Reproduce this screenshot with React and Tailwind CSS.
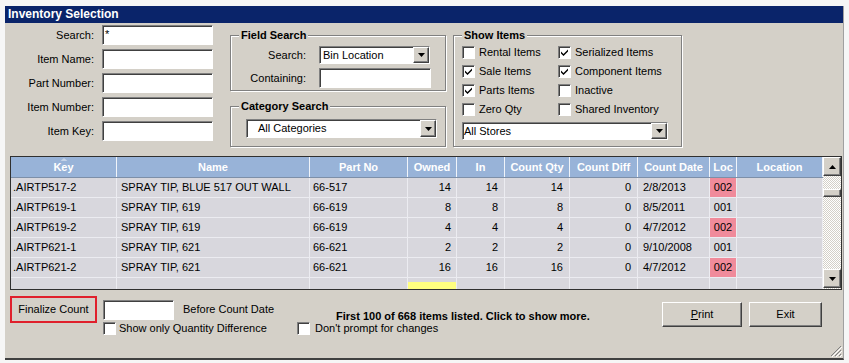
import React from "react";

const sunken =
  "bg-white border border-t-[#808080] border-l-[#808080] border-b-white border-r-white shadow-[inset_1px_1px_0_#404040]";
const raised =
  "bg-[#d4d0c8] border border-t-white border-l-white border-r-[#404040] border-b-[#404040] shadow-[inset_-1px_-1px_0_#808080]";

function Arrow({ down = true }) {
  return (
    <svg width="7" height="4" viewBox="0 0 7 4" className={down ? "" : "rotate-180"}>
      <path d="M0 0H7L3.5 4Z" fill="#000" />
    </svg>
  );
}

function Select({ text, className, textClass = "pl-[3px]" }) {
  return (
    <div className={`${sunken} ${className} flex items-center`}>
      <span className={`flex-1 ${textClass}`}>{text}</span>
      <div className={`${raised} w-[16px] h-full flex items-center justify-center`}>
        <Arrow />
      </div>
    </div>
  );
}

function Check({ checked }) {
  return (
    <div className={`${sunken} w-[13px] h-[13px] flex items-center justify-center shrink-0`}>
      {checked && (
        <svg width="7" height="7" viewBox="0 0 7 7">
          <path d="M0 2.5L2.5 5L7 0.5V2.5L2.5 7L0 4.5Z" fill="#000" />
        </svg>
      )}
    </div>
  );
}

function Group({ title, className, children }) {
  return (
    <div
      className={`relative border border-[#808080] shadow-[1px_1px_0_#fff,inset_1px_1px_0_#fff] ${className}`}
    >
      <span className="absolute -top-[7px] left-[8px] bg-[#d4d0c8] px-[2px] font-bold leading-[13px]">
        {title}
      </span>
      {children}
    </div>
  );
}

const cols = [
  { h: "Key", w: "w-[106px]", a: "text-left pl-[2px]" },
  { h: "Name", w: "w-[193px]", a: "text-left pl-[4px]" },
  { h: "Part No", w: "w-[98px]", a: "text-left pl-[3px]" },
  { h: "Owned", w: "w-[49px]", a: "text-right pr-[5px]" },
  { h: "In", w: "w-[48px]", a: "text-right pr-[6px]" },
  { h: "Count Qty", w: "w-[65px]", a: "text-right pr-[6px]" },
  { h: "Count Diff", w: "w-[68px]", a: "text-right pr-[6px]" },
  { h: "Count Date", w: "w-[72px]", a: "text-left pl-[5px]" },
  { h: "Loc", w: "w-[27px]", a: "text-center" },
  { h: "Location", w: "w-[86px]", a: "" },
];

const rows = [
  [".AIRTP517-2", "SPRAY TIP, BLUE 517 OUT WALL", "66-517", "14", "14", "14", "0", "2/8/2013", "002", ""],
  [".AIRTP619-1", "SPRAY TIP, 619", "66-619", "8", "8", "8", "0", "8/5/2011", "001", ""],
  [".AIRTP619-2", "SPRAY TIP, 619", "66-619", "4", "4", "4", "0", "4/7/2012", "002", ""],
  [".AIRTP621-1", "SPRAY TIP, 621", "66-621", "2", "2", "2", "0", "9/10/2008", "001", ""],
  [".AIRTP621-2", "SPRAY TIP, 621", "66-621", "16", "16", "16", "0", "4/7/2012", "002", ""],
];

const labels = ["Search:", "Item Name:", "Part Number:", "Item Number:", "Item Key:"];

const showItems = [
  ["Rental Items", false, "Serialized Items", true],
  ["Sale Items", true, "Component Items", true],
  ["Parts Items", true, "Inactive", false],
  ["Zero Qty", false, "Shared Inventory", false],
];

export default function App() {
  return (
    <div className="min-h-screen bg-[#f6f6f6] pl-[5px] pt-[6px] font-['Liberation_Sans',Arial,sans-serif] text-[11px] leading-[13px] text-black">
      <div className="relative w-[839px] h-[354px] flex flex-col bg-[#d4d0c8] border-b-2 border-b-[#404040] border-r border-r-[#a0a0a0]">
        {/* title */}
        <div className="h-[17px] shrink-0 bg-[#0a246a] text-white font-bold text-[12px] leading-[17px] pl-[3px]">
          Inventory Selection
        </div>

        {/* top section */}
        <div className="h-[133px] shrink-0 flex">
          <div className="w-[225px] pt-[2px] flex flex-col gap-[4px]">
            {labels.map((l, i) => (
              <div key={l} className="flex items-center gap-[8px]">
                <span className="w-[89px] text-right">{l}</span>
                <div className={`${sunken} w-[111px] h-[20px] pl-[2px] leading-[16px]`}>
                  {i === 0 ? "*" : ""}
                </div>
              </div>
            ))}
          </div>

          <div className="w-[216px] pt-[12px] flex flex-col">
            <Group title="Field Search" className="h-[56px]">
              <div className="flex items-center mt-[10px]">
                <span className="w-[75px] text-right">Search:</span>
                <Select text="Bin Location" className="ml-[13px] w-[111px] h-[18px]" />
              </div>
              <div className="flex items-center mt-[4px]">
                <span className="w-[75px] text-right">Containing:</span>
                <div className={`${sunken} ml-[13px] w-[112px] h-[20px]`} />
              </div>
            </Group>
            <Group title="Category Search" className="h-[41px] mt-[15px]">
              <Select
                text="All Categories"
                textClass="pl-[11px]"
                className="ml-[15px] mt-[12px] w-[191px] h-[19px]"
              />
            </Group>
          </div>

          <div className="ml-[7px] pt-[12px]">
            <Group title="Show Items" className="w-[229px] h-[112px] pt-[7px]">
              {showItems.map(([a, ac, b, bc]) => (
                <div key={a} className="h-[19px] flex items-center">
                  <div className="w-[104px] pl-[8px] flex items-center gap-[4px]">
                    <Check checked={ac} />
                    <span>{a}</span>
                  </div>
                  <div className="flex items-center gap-[4px]">
                    <Check checked={bc} />
                    <span>{b}</span>
                  </div>
                </div>
              ))}
              <Select text="All Stores" textClass="pl-[1px]" className="ml-[8px] mt-[3px] w-[206px] h-[18px]" />
            </Group>
          </div>
        </div>

        {/* grid */}
        <div className="ml-[5px] w-[832px] h-[134px] shrink-0 border border-[#303030] flex overflow-hidden">
          <div className="flex-1 flex flex-col overflow-hidden bg-[#d8d7dd]">
            <div className="h-[21px] shrink-0 flex bg-[#98b3d8] border-b border-[#7d8fa8]">
              {cols.map((c) => (
                <div
                  key={c.h}
                  className={`${c.w} shrink-0 relative flex items-center justify-center pt-[1px] text-white font-bold border-r border-r-[#f0f4fa]`}
                >
                  {c.h === "Key" && (
                    <svg className="absolute top-[1px] left-1/2 -translate-x-1/2" width="7" height="3" viewBox="0 0 7 3">
                      <path d="M0 3L3.5 0L7 3Z" fill="#c5d3e8" />
                    </svg>
                  )}
                  {c.h}
                </div>
              ))}
            </div>
            {rows.map((r, ri) => (
              <div key={ri} className="h-[20px] shrink-0 flex border-b border-b-[#ececf1]">
                {cols.map((c, ci) => (
                  <div
                    key={ci}
                    className={`${c.w} shrink-0 leading-[19px] whitespace-nowrap overflow-hidden border-r border-r-[#ececf1] ${c.a} ${
                      ci === 8 && r[8] === "002" ? "bg-[#f08b9b]" : ""
                    }`}
                  >
                    {r[ci]}
                  </div>
                ))}
              </div>
            ))}
            <div className="h-[20px] shrink-0 flex">
              {cols.map((c, ci) => (
                <div key={ci} className={`${c.w} shrink-0 border-r border-r-[#ececf1] flex flex-col`}>
                  {ci === 3 && <div className="mt-[4px] h-[16px] bg-[#ffff80]" />}
                </div>
              ))}
            </div>
          </div>
          {/* scrollbar */}
          <div className="w-[18px] shrink-0 flex flex-col bg-[repeating-conic-gradient(#ffffff_0_25%,#d4d0c8_0_50%)] bg-[length:2px_2px]">
            <div className={`${raised} h-[19px] shrink-0 flex items-center justify-center`}>
              <Arrow down={false} />
            </div>
            <div className={`${raised} h-[8px] shrink-0 mt-[13px]`} />
            <div className="flex-1" />
            <div className={`${raised} h-[19px] shrink-0 mb-[1px] flex items-center justify-center`}>
              <Arrow />
            </div>
          </div>
        </div>

        {/* bottom */}
        <div className="flex-1 flex">
          <div className="ml-[5px] mt-[6px] w-[287px] flex flex-col">
            <div className="h-[27px] flex items-center">
              <div className="w-[87px] h-[27px] border-2 border-[#e0202c] flex items-center justify-center">
                Finalize Count
              </div>
              <div className={`${sunken} ml-[6px] w-[71px] h-[20px]`} />
              <span className="ml-[9px]">Before Count Date</span>
            </div>
            <div className="-mt-[1px] ml-[93px] flex items-center gap-[3px]">
              <Check />
              <span>Show only Quantity Difference</span>
            </div>
          </div>
          <div className="w-[365px] flex flex-col pt-[20px]">
            <span className="pl-[39px] font-bold">First 100 of 668 items listed. Click to show more.</span>
            <div className="mt-[-1px] flex items-center gap-[5px]">
              <Check />
              <span>Don&apos;t prompt for changes</span>
            </div>
          </div>
          <div className="mt-[12px] flex gap-[7px]">
            <div className={`${raised} w-[80px] h-[25px] flex items-center justify-center`}>
              <span>
                <span className="underline">P</span>rint
              </span>
            </div>
            <div className={`${raised} w-[73px] h-[25px] flex items-center justify-center`}>Exit</div>
          </div>
        </div>

        {/* resize grip */}
        <svg className="absolute right-[1px] bottom-[1px]" width="12" height="12" viewBox="0 0 12 12">
          <path d="M11 1L1 11M11 5L5 11M11 9L9 11" stroke="#808080" strokeWidth="1" />
          <path d="M12 2L2 12M12 6L6 12M12 10L10 12" stroke="#ffffff" strokeWidth="1" />
        </svg>
      </div>
    </div>
  );
}
